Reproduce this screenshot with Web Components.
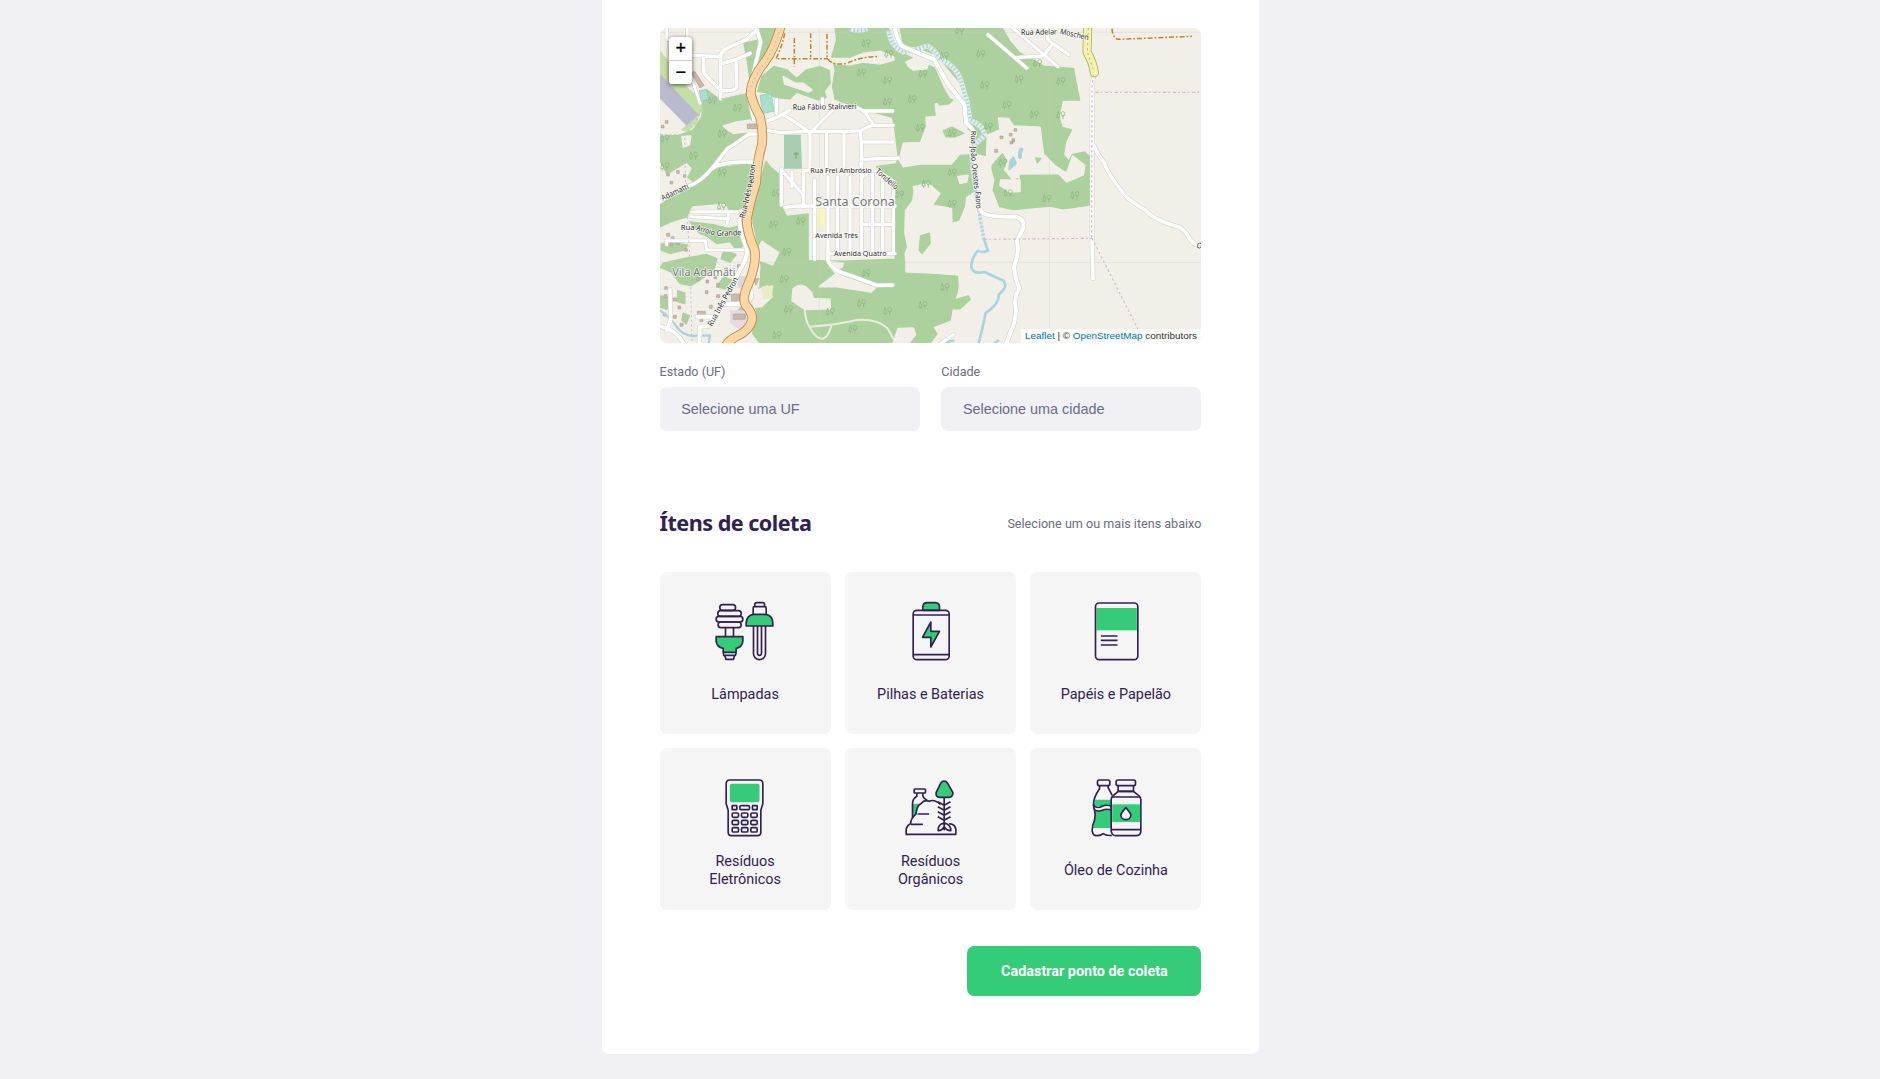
<!DOCTYPE html>
<html lang="pt-BR">
<head>
<meta charset="utf-8">
<title>Ecoleta</title>
<style>
html,body{margin:0;height:100%}
body{background:#f0f0f5;font-family:Roboto,sans-serif;overflow:hidden}
</style>
</head>
<body>
<collect-page>
  <collect-map slot="map"></collect-map>
  <select-field slot="field" label="Estado (UF)">Selecione uma UF</select-field>
  <select-field slot="field" label="Cidade">Selecione uma cidade</select-field>
  <section-legend slot="items" hint="Selecione um ou mais itens abaixo">Ítens de coleta</section-legend>
  <item-grid slot="items">
    <item-card icon="lamp">Lâmpadas</item-card>
    <item-card icon="battery">Pilhas e Baterias</item-card>
    <item-card icon="paper">Papéis e Papelão</item-card>
    <item-card icon="device">Resíduos Eletrônicos</item-card>
    <item-card icon="organic">Resíduos Orgânicos</item-card>
    <item-card icon="oil">Óleo de Cozinha</item-card>
  </item-grid>
  <submit-button slot="action">Cadastrar ponto de coleta</submit-button>
</collect-page>

<template id="map-art">
<svg viewBox="30 24 1625.4 945" preserveAspectRatio="none" aria-hidden="true">
  <defs>
    <g id="t" fill="none" stroke="#8cb781" stroke-width="2.2">
      <path d="M-12,6 L-7,-12 L-2,6 Z M-7,6 V12 M7,12 V1 M7,4 L3,0 M7,4 L11,0"/><circle cx="7" cy="-5" r="6"/>
    </g>
  </defs>
  <rect x="30" y="24" width="1626" height="945" fill="#f2efe9"/>
  <g fill="#add19e" stroke="#add19e" stroke-width="5" stroke-linejoin="round">
    <!-- western woods -->
    <path d="M322,24 L382,24 374,62 340,120 300,180 318,120 325,66Z"/>
    <path d="M282,70 L320,62 316,120 300,178 292,120Z"/>
    <path d="M170,210 L210,240 290,222 292,250 306,300 270,306 232,314 218,322 236,338 300,340 250,372 210,400 176,446 120,494 60,480 30,420 30,350 90,346 130,330 156,290 158,250Z"/>
    <path d="M30,90 L60,130 110,200 142,226 158,262 140,310 112,336 92,330 140,290 90,240 30,165Z" fill="#c5dfa8" stroke="none"/>
    <path d="M190,446 L310,430 316,520 296,560 240,572 226,548 126,556 110,590 60,606 30,620 30,540 110,510Z"/>
    <path d="M120,606 L186,614 236,626 270,618 284,670 262,692 240,664 200,670 172,648 150,640Z"/>
    <path d="M34,672 L70,668 112,676 104,690 60,700 34,690Z"/>
    <path d="M40,730 L110,714 170,704 200,716 192,748 156,776 124,796 90,790 64,756 32,742Z"/>
    <path d="M84,812 L104,820 104,850 82,844Z M30,828 L62,832 50,868 30,860Z M222,690 L258,704 240,726 214,716Z M222,772 L244,780 226,806 200,800Z"/>
    <path d="M100,880 L118,888 108,912 96,900Z M282,850 L292,880 270,900 250,890Z"/>
    <!-- blobs beside the highway -->
    <path d="M372,140 L410,150 440,176 470,150 510,140 538,152 540,190 522,214 528,232 506,240 440,216 420,236 376,232 350,218 324,214 336,170Z"/>
    <!-- central and eastern woods -->
    <path d="M556,24 L1056,24 1078,62 1108,98 1184,140 1270,146 1274,190 1288,240 1262,234 1236,242 1226,290 1236,322 1264,330 1246,366 1240,404 1256,424 1268,404 1304,396 1318,410 1320,555 1240,566 1200,558 1090,568 1050,560 1030,510 1036,480 1024,440 1058,400 1074,430 1080,466 1114,484 1110,462 1180,464 1226,450 1188,430 1172,400 1170,330 1060,318 1040,296 1050,330 1010,352 1006,410 988,412 970,380 976,510 946,530 942,560 926,600 902,606 904,560 852,556 876,520 844,492 790,500 784,540 762,570 760,640 770,690 762,756 840,762 920,768 926,820 900,846 902,900 846,920 836,969 330,969 308,940 322,880 310,840 330,800 334,740 326,680 310,610 306,560 326,500 348,424 360,440 394,470 394,560 410,590 474,582 474,722 580,724 736,718 738,480 680,440 738,432 746,416 734,320 728,292 660,272 620,262 556,238 548,200 556,150 546,110 560,60Z"/>
    <path d="M878,330 L906,320 940,338 920,352 884,350Z"/>
  </g>
  <g fill="#f2efe9" stroke="#f2efe9" stroke-width="5" stroke-linejoin="round">
    <path d="M220,318 L260,306 300,300 316,332 250,340Z"/>
    <path d="M196,438 L240,392 304,346 322,350 312,424 240,428Z"/>
    <path d="M46,470 L110,432 122,446 108,474 130,490 60,506 34,508Z"/>
    <path d="M96,350 L122,348 118,374 100,382Z"/>
    <path d="M640,100 L690,94 730,110 732,120 690,132 640,126 600,134 560,132 540,116 600,116Z"/>
    <path d="M720,24 L746,24 756,76 810,90 860,110 892,150 926,190 950,262 950,330 930,328 930,276 890,214 856,140 800,116 762,96 740,80Z"/>
    <path d="M768,126 L800,112 836,128 830,146 790,150 776,140Z"/>
    <path d="M856,252 L910,240 940,272 948,330 970,340 970,400 928,402 904,432 810,432 760,440 748,420 760,370 812,368 830,320 828,292 860,290Z"/>
    <path d="M1046,294 L1076,296 1090,318 1170,322 1180,402 1216,438 1250,460 1268,408 1304,436 1300,464 1250,486 1226,460 1110,462 1090,480 1064,450 1074,420 1058,394 1022,430 1020,480 980,470 966,400 1010,412 1012,346 1050,330Z"/>
    <path d="M1052,480 L1110,480 1110,514 1080,516 1050,496Z"/>
    <path d="M400,170 L436,190 460,190 486,210 476,216 440,204 404,192Z"/>
    <path d="M790,500 L836,492 856,510 848,556 904,566 906,620 936,600 950,560 1060,566 1060,969 840,969 850,940 904,900 894,846 926,820 920,764 840,758 770,756 766,700 790,640 786,590 804,550Z"/>
    <path d="M336,664 L386,698 368,734 310,714Z"/>
    <path d="M300,820 L352,798 366,830 334,860 296,862Z"/>
    <path d="M430,806 Q446,792 466,800 L484,816 490,836 540,838 540,866 464,868 426,842Z"/>
    <path d="M510,798 L558,762 530,724 580,730 576,742 550,752 580,770 676,804 664,816 560,800 508,800Z"/>
    <path d="M744,926 L790,924 796,944 776,969 730,969Z"/>
    <path d="M924,470 L954,466 950,486 930,490Z"/>
  </g>
  <g fill="#add19e" stroke="#add19e" stroke-width="5" stroke-linejoin="round">
    <path d="M880,332 L906,322 940,340 916,350 888,350Z M812,648 L838,640 840,670 816,700 808,690Z"/>
    <path d="M860,240 L880,232 908,240 894,252 868,254Z"/>
    <path d="M812,768 L922,770 924,800 914,840 954,828 960,838 930,866 906,866 900,900 846,918 860,942 840,969 812,969Z"/>
    <path d="M1158,414 L1172,416 1162,428Z"/>
    <path d="M1208,180 L1270,146 1288,240 1236,240Z M1290,400 L1320,408 1320,430Z"/>
  </g>
  <!-- airport, pitches, civic areas -->
  <path d="M30,162 L146,284 110,318 30,236Z" fill="#bbbbcf"/>
  <path d="M148,212 L170,208 176,238 154,244Z M330,226 L364,220 372,274 338,280Z" fill="#aae0cb" stroke="#8cc6b0" stroke-width="2"/>
  <path d="M402,344 L452,344 456,446 402,446Z" fill="#aacbaf"/>
  <path d="M438,396 V416 M431,402 H446" stroke="#7fab83" stroke-width="4"/>
  <path d="M500,564 L526,568 524,622 500,622Z" fill="#f8f6b8"/>
  <path d="M240,870 L290,872 288,920 264,926 240,910Z" fill="#ead8e6"/>
  <path d="M334,800 L370,796 366,834 340,838Z" fill="#e8ecc7"/>
  <path d="M264,766 L290,770 280,810 262,800Z" fill="#dcdad6"/>
  <g fill="#c8b9ad" stroke="#b5a294" stroke-width="2">
    <path d="M292,312 H324 V326 H292Z M250,882 H286 V898 H250Z M244,822 H270 V842 H244Z M142,874 H166 V884 H142Z M310,776 L326,776 318,796Z M124,158 L134,154 162,196 150,204Z"/>
    <path d="M50,640 h9 v9 h-9z M64,650 h8 v10 h-8z M80,664 h8 v10 h-8z M104,686 h8 v8 h-8z M60,670 h8 v8 h-8z M44,800 h8 v8 h-8z M42,824 h9 v9 h-9z M70,834 h9 v9 h-9z M84,858 h8 v9 h-8z M40,880 h8 v8 h-8z M140,774 h8 v8 h-8z M168,780 h8 v9 h-8z M192,768 h8 v8 h-8z M200,790 h9 v9 h-9z M166,812 h8 v9 h-8z M200,824 h9 v9 h-9z M224,744 h9 v9 h-9z M262,734 h8 v9 h-8z M206,850 h8 v9 h-8z M178,856 h9 v9 h-9z M150,896 h8 v9 h-8z M70,886 h9 v9 h-9z M90,910 h9 v9 h-9z M46,920 h8 v9 h-8z"/>
    <path d="M1092,326 h8 v8 h-8z M1078,340 h8 v8 h-8z M1050,348 h9 v8 h-9z M1086,356 h8 v10 h-8z M1034,388 h9 v9 h-9z M1080,364 h9 v8 h-9z M50,460 h8 v8 h-8z M80,452 h8 v8 h-8z M100,464 h8 v8 h-8z M60,484 h8 v8 h-8z M46,302 h8 v8 h-8z M34,316 h8 v8 h-8z"/>
  </g>
  <!-- water -->
  <g fill="none" stroke="#aad3df" stroke-linejoin="round" stroke-linecap="round">
    <g stroke-linecap="butt">
      <path d="M600,26 Q625,36 652,26 M716,30 Q722,80 760,96 Q800,90 832,78 Q850,86 870,116 Q920,140 932,180 L950,240 960,300 Q1004,320 1004,346 Q980,370 966,380" stroke="#e3edea" stroke-width="15"/>
      <path d="M600,26 Q625,36 652,26 M716,30 Q722,80 760,96 Q800,90 832,78 Q850,86 870,116 Q920,140 932,180 L950,240 960,300 Q1004,320 1004,346 Q980,370 966,380" stroke-width="13" stroke-dasharray="4 7"/>
      <path d="M966,380 Q960,420 976,510 L986,570 1002,658" stroke="#dfe9e8" stroke-width="11"/>
      <path d="M966,380 Q960,420 976,510 L986,570 1002,658" stroke-width="10" stroke-dasharray="5 7"/>
    </g>
    <path d="M1002,658 L1014,692 Q1000,700 984,692 Q962,718 964,742 Q970,764 1004,756 L1060,782 Q1076,800 1046,824 Q1050,850 1006,880 Q1004,900 986,969" stroke-width="8"/>
    <path d="M30,872 Q60,890 80,920 Q96,946 130,948 L180,946 176,969" stroke-width="7"/>
    <path d="M1114,388 Q1108,396 1110,412" stroke-width="12"/>
    <path d="M1080,424 L1090,412 1098,430 1078,448Z" fill="#aad3df" stroke-width="6"/>
    <path d="M890,966 L910,962 M1034,969 L1044,962" stroke-width="8"/>
  </g>
  <path d="M30,37 H1653 M30,727 H1653 M508,24 V969 M1198,24 V969" stroke="#c9cfc5" stroke-width="1.6" opacity=".65"/>
  <g>
    <use href="#t" x="648" y="70"/><use href="#t" x="634" y="158"/><use href="#t" x="712" y="182"/><use href="#t" x="786" y="238"/><use href="#t" x="810" y="324"/><use href="#t" x="716" y="102"/><use href="#t" x="818" y="162"/><use href="#t" x="712" y="246"/><use href="#t" x="216" y="342"/><use href="#t" x="130" y="408"/><use href="#t" x="216" y="458"/><use href="#t" x="44" y="356"/><use href="#t" x="186" y="242"/><use href="#t" x="262" y="264"/><use href="#t" x="44" y="440"/><use href="#t" x="214" y="560"/><use href="#t" x="370" y="614"/><use href="#t" x="452" y="604"/><use href="#t" x="410" y="696"/><use href="#t" x="402" y="778"/><use href="#t" x="415" y="868"/><use href="#t" x="380" y="946"/><use href="#t" x="540" y="876"/><use href="#t" x="634" y="850"/><use href="#t" x="712" y="874"/><use href="#t" x="608" y="928"/><use href="#t" x="648" y="760"/><use href="#t" x="818" y="856"/><use href="#t" x="748" y="524"/><use href="#t" x="884" y="802"/><use href="#t" x="928" y="32"/><use href="#t" x="992" y="102"/><use href="#t" x="882" y="108"/><use href="#t" x="1004" y="196"/><use href="#t" x="1106" y="178"/><use href="#t" x="1162" y="130"/><use href="#t" x="1232" y="184"/><use href="#t" x="1070" y="256"/><use href="#t" x="1152" y="284"/><use href="#t" x="1014" y="320"/><use href="#t" x="906" y="340"/><use href="#t" x="1058" y="428"/><use href="#t" x="906" y="458"/><use href="#t" x="828" y="492"/><use href="#t" x="906" y="552"/><use href="#t" x="1074" y="520"/><use href="#t" x="1190" y="536"/><use href="#t" x="1274" y="526"/><use href="#t" x="1232" y="286"/><use href="#t" x="378" y="520"/>
  </g>
  <g id="streets"></g>
  <g fill="none" stroke="#eef0e2" stroke-width="6" opacity=".9">
    <path d="M464,868 Q466,900 478,920 Q560,915 620,900 Q680,896 712,924 L736,966 M478,920 Q500,960 520,956 Q536,948 544,918"/>
  </g>
  <g fill="none" stroke="#b8862f" stroke-width="4.5" stroke-dasharray="15 6 5 6">
    <path d="M404,40 Q396,80 378,116 H534 M433,54 V140 M482,40 V112 M531,42 V112 M534,118 Q550,138 590,130 Q640,108 684,110"/>
    <path d="M1386,26 Q1388,56 1406,58 L1626,49"/>
  </g>
  <g fill="none" stroke="#cdb9cf" stroke-width="3.4">
    <path d="M1336,217 H1653 M1002,658 L1326,655" stroke-dasharray="10 6 5 8"/>
    <path d="M1326,655 L1470,940" stroke-dasharray="7 8"/>
    <path d="M30,344 H104 L106,470 110,560 118,690 122,800 126,969 M104,344 Q150,300 158,250 L280,222" stroke-width="3" stroke-dasharray="6 8"/>
  </g>
  <path d="M1313,24 L1311,96 Q1330,130 1333,158" fill="none" stroke="#aab15c" stroke-width="27" stroke-linecap="round"/>
  <path d="M1313,20 L1311,96 Q1330,130 1333,158" fill="none" stroke="#f4f5aa" stroke-width="22" stroke-linecap="round"/>
  <path d="M1315,24 L1312,96 L1332,156 M1330,166 L1326,200 1325,655" fill="none" stroke="#c3adc6" stroke-width="3.4" stroke-dasharray="7 8"/>
  <g fill="none" stroke-linejoin="round">
    <path d="M392,20 Q372,90 344,126 Q302,180 302,222 Q312,260 330,290 Q340,330 336,372 Q320,430 318,490 Q298,550 290,602 Q292,640 314,690 Q320,730 296,790 Q276,830 286,854 Q310,880 306,900 Q300,930 262,948 Q236,960 228,976" stroke="#b58a45" stroke-width="29"/>
    <path d="M392,20 Q372,90 344,126 Q302,180 302,222 Q312,260 330,290 Q340,330 336,372 Q320,430 318,490 Q298,550 290,602 Q292,640 314,690 Q320,730 296,790 Q276,830 286,854 Q310,880 306,900 Q300,930 262,948 Q236,960 228,976" stroke="#fcd6a4" stroke-width="24"/>
    <path d="M388,36 Q370,94 342,132 Q310,176 294,220" stroke="#cbb3c0" stroke-width="3" stroke-dasharray="5 9"/>
  </g>
  <g id="names" font-family="'Noto Sans',sans-serif" font-size="23.5" fill="#2b2b2b" stroke="#fff" stroke-opacity=".75" stroke-width="5" paint-order="stroke" stroke-linejoin="round"></g>
</svg>
</template>

<script>
const define=(name,css,html,setup)=>customElements.define(name,class extends HTMLElement{
  constructor(){super();const r=this.attachShadow({mode:'open'});r.innerHTML=`<style>${css}</style>${html}`}
  connectedCallback(){if(setup)setup(this,this.shadowRoot)}
});

define('collect-page',`
:host{display:flex;justify-content:center;padding-right:19px;height:1079px;box-sizing:border-box;align-items:flex-start}
main{width:657px;height:1054px;box-sizing:border-box;padding:28px 57.6px 57.6px;background:#fff;border-radius:0 0 7.2px 7.2px;display:flex;flex-direction:column}
.fields{display:flex;gap:21.6px;margin-top:21px}
.items{margin-top:auto;display:flex;flex-direction:column}
.action{display:flex;justify-content:flex-end;margin-top:36px}`,
`<main><slot name="map"></slot><div class="fields"><slot name="field"></slot></div><div class="items"><slot name="items"></slot></div><div class="action"><slot name="action"></slot></div></main>`);

define('select-field',`
:host{display:flex;flex-direction:column;flex:1}
label{font-size:12.6px;line-height:15px;color:#6c6c80;margin-bottom:8px}
div{height:44px;border-radius:7.2px;background:#f0f0f5;color:#6c6c80;padding:0 21.6px;display:flex;align-items:center;font:14.4px "Liberation Sans",Arial,sans-serif}`,
`<label></label><div><slot></slot></div>`,(e,r)=>r.querySelector('label').textContent=e.getAttribute('label'));

define('section-legend',`
:host{display:flex;justify-content:space-between;align-items:center;height:26px;margin-bottom:35.6px}
h2{margin:0;font:700 21.6px/26px "Noto Sans",sans-serif;letter-spacing:-.52px;color:#322153;white-space:nowrap}
span{font-size:12.6px;color:#6c6c80}`,
`<h2><slot></slot></h2><span></span>`,(e,r)=>r.querySelector('span').textContent=e.getAttribute('hint'));

define('item-grid',`:host{display:grid;grid-template-columns:repeat(3,1fr);gap:14.4px}`,`<slot></slot>`);

const icons={
lamp:['187.5 104',`<rect x="211" y="118" width="47" height="17" rx="8"/><rect x="205" y="136" width="70" height="17" rx="8"/><rect x="200" y="153" width="80" height="17" rx="8"/><rect x="206" y="170" width="69" height="17" rx="8"/><path d="M228,188 V213 M252,188 V213"/><path class="g" d="M200,214 H280 V228 Q278,245 260,249 V261 H221 V249 Q202,245 200,228Z"/><path d="M221,261 L223,270 H258 L260,261 M226,271 L229,282 H252 L255,271"/><path d="M316,124 V116 Q317,112 322,112 H340 Q344,112 345,116 V124 M311,146 V128 Q311,124 315,124 H346 Q350,124 350,128 V146"/><path class="g" d="M290,182 V172 Q292,150 312,147 H350 Q370,152 370,172 V182Z"/><path d="M312,182 V265 A18,18 0 0 0 348,265 V182 M324,182 V264 A6,6 0 0 0 336,264 V182"/>`],
battery:['172.5 104',`<path class="g" d="M247,135 V124 Q248,112 259,112 H285 Q297,113 297,124 V135Z"/><rect x="218" y="135" width="108" height="148" rx="11"/><path d="M218,149 H326 M218,268 H326"/><path class="g" d="M271,170 V198 H297 L271,245 V216 H246Z"/>`],
paper:['187.5 104',`<rect class="f" x="228" y="128" width="121" height="67"/><rect x="225" y="113" width="127" height="170" rx="11"/><path d="M241,212 H291 M241,225 H291 M241,239 H291"/>`],
device:['187.5 107',`<path d="M241,119 H329 Q340,119 340,130 V190 L334,210 V276 Q334,286 324,286 H246 Q236,286 236,276 V210 L230,190 V130 Q230,119 241,119Z"/><rect class="f" x="241" y="130" width="89" height="56" rx="6"/><g><rect x="248" y="196" width="14" height="12" rx="1"/><rect x="271" y="196" width="29" height="12" rx="4"/><rect x="309" y="196" width="14" height="12" rx="1"/></g>`+[218,240,262].map(y=>[248,276,304].map(x=>`<rect x="${x}" y="${y}" width="19" height="13" rx="4"/>`).join('')).join('')],
organic:['172.5 107',`<path class="f" d="M216,190 H240 Q232,200 230,218 L216,230Z"/><rect x="221" y="146" width="34" height="12" rx="2"/><path d="M229,158 V168 Q216,176 216,190 V234 M247,158 V166 Q250,176 260,180"/><path d="M197,282 V268 Q198,256 210,250 Q212,232 226,222 Q228,196 241,190 Q252,177 266,183 Q280,175 300,192 M326,250 Q345,252 346,268 V282 H195"/><path d="M231,221 H266 M211,252 H247"/><path class="g" d="M311,122 Q304,122 300,130 L287,156 Q285,170 297,171 H326 Q339,168 337,156 L322,130 Q318,122 311,122Z"/><path d="M311,171 V270 M292,184 L311,195 330,184 M292,199 L311,210 330,199 M292,214 L311,225 330,214 M292,229 L311,240 330,229 M311,248 Q292,252 293,271 Q306,270 311,258 Q316,270 331,271 Q331,252 311,248"/>`],
oil:['187.5 107',`<path class="f" d="M222,178 H272 V198 H220Z M222,209 H272 V263 H217 Q226,240 222,209Z"/><rect x="231" y="119" width="37" height="17" rx="5"/><path d="M237,136 V145 Q219,172 219,190 Q219,200 222,208 Q226,225 222,240 Q215,255 215,270 Q216,286 228,286 Q240,287 248,280 Q258,287 274,285 M263,136 V142 L275,165"/><path class="w" d="M219,196 Q232,206 245,198 Q258,192 272,197 V209 Q258,204 245,210 Q232,215 222,208Z"/><path class="w" d="M293,153 L276,168 Q272,172 272,178 V272 Q274,286 286,286 H348 Q361,285 361,272 V178 Q361,170 354,165 L339,153Z"/><rect class="f" x="275" y="192" width="84" height="53"/><rect x="287" y="119" width="58" height="17" rx="5"/><path d="M293,136 V153 H339 V136 M274,170 H359 M272,268 H361"/><path class="w" d="M316,202 Q301,219 301,225 A15,13 0 0 0 331,225 Q331,219 316,202Z"/>`]
};
define('item-card',`
:host{display:flex;flex-direction:column;align-items:center;box-sizing:border-box;height:162px;padding:28.4px 36px 5.6px;background:#f5f5f5;border-radius:7.2px}
svg{width:66px;height:62px;flex:none;fill:none;stroke:#322153;stroke-width:5;stroke-linejoin:round;margin-left:.8px}
.g{fill:#34cb79}.f{fill:#34cb79;stroke:none}.w{fill:#f5f5f5}
span{flex:1;display:flex;align-items:center;text-align:center;font-size:14.4px;line-height:18px;color:#322153}
:host([icon=battery]),:host([icon=paper]),:host([icon=oil]){padding-left:10px;padding-right:10px}
:host([icon=paper]) svg,:host([icon=oil]) svg{margin-left:-.8px}`,
`<svg aria-hidden="true"></svg><span><slot></slot></span>`,(e,r)=>{const [o,a]=icons[e.getAttribute('icon')];const s=r.querySelector('svg');s.setAttribute('viewBox',o+' 198 186');s.innerHTML=a});

define('submit-button',`
button{width:234px;height:50.4px;border:0;border-radius:7.2px;background:#34cb79;color:#fff;font:700 14.4px Roboto,sans-serif;padding:1px 0 0}`,`<button><slot></slot></button>`);

/* each entry: stroke width, path */
const streets=[
[13,'M125,106 L162,108 210,110 M320,26 L332,66 308,170 296,230 312,300 M210,110 Q216,88 250,76 L290,58 320,30 M160,110 L162,160 212,212 M212,110 V236 M214,130 Q250,124 300,100 M258,126 L260,200 Q258,214 214,212'],
[10,'M50,24 V60 M50,60 L112,60 M112,60 V24 M64,90 L120,160 150,250'],
[12,'M346,304 Q380,296 420,270 M380,238 V280 M400,284 L470,330 M487,332 L556,262 M517,236 V256 M355,332 L390,338 470,334 600,334 630,332 668,314 M620,262 L645,276 670,314 M640,273 H728 M668,316 H730 M636,366 H730 M636,418 L746,414 M632,334 L636,430'],
[12,'M480,334 V456 M530,334 V440 M582,334 V440 M632,430 L640,470'],
[12,'M394,446 V555 M394,450 L456,520 M460,450 V560 M426,456 V500 M404,562 L440,558 H735 M494,480 V718 M460,452 L480,450 M534,470 V690 M562,470 V700 M600,470 V700 M634,460 V700 M668,462 V700 M698,480 V700 M730,500 V698 M636,613 H730 M540,701 H735'],
[13,'M534,690 V720 Q540,742 570,756 Q640,780 680,796 L728,795'],
[12,'M320,342 H296 Q260,370 232,386 L190,440 Q150,490 110,500 L60,524 30,546 M312,426 H266 Q210,428 186,446'],
[11,'M124,576 H264 M122,590 L236,596 M236,576 L232,610 M130,575 H250 M48,662 H166 L170,690 H280 M50,662 V674'],
[14,'M268,600 Q270,640 292,690 Q290,720 266,756 Q240,820 176,918 L150,920 148,969 M300,860 L262,852 226,852 M300,800 L304,830 290,860 M142,890 H196'],
[13,'M60,808 L62,900 50,930 M30,918 Q80,930 100,969'],
[14,'M734,24 Q742,60 756,78 Q780,90 852,118 L890,186 944,256 948,308 Q970,326 974,344 M990,568 Q994,578 1004,582 Q1030,592 1096,590 Q1124,596 1120,624 L1100,664 Q1110,690 1092,740 Q1094,770 1108,806 Q1090,830 1098,870 Q1096,910 1080,940 L1070,969'],
[12,'M1014,44 L1130,144 M1088,24 L1224,140 M1104,112 L1180,108 1208,72 1192,56 V24 M1208,70 L1256,104'],
[13,'M1334,160 L1326,190 M1326,190 V655 L1329,776 M1332,376 Q1340,400 1364,430 Q1366,450 1420,520 Q1440,545 1486,570 Q1510,600 1590,622 Q1612,640 1620,658 L1636,674'],
[12,'M870,972 L910,944']
];
/* each entry: x, y, rotation, length, text, font size and colour for district names */
const names=[
[428,270,-1,192,'Rua Fábio Stalivieri'],
[481,459,0,184,'Rua Frei Ambrósio'],
[675,456,41,82,'Tondello'],
[496,654,0,128,'Avenida Três'],
[552,708,0,158,'Avenida Quatro'],
[284,596,-77,90,'Rua Inês'],
[309,504,-84,70,'Pedron'],
[186,920,-61,163,'Rua Inês Pedron'],
[38,542,-25,88,'Adamatti'],
[92,629,0,42,'Rua'],
[138,630,17,56,'Arroio'],
[200,648,-2,74,'Grande'],
[1113,45,-1,108,'Rua Adelar'],
[1229,41,13,88,'Moschen'],
[963,332,90,40,'Rua'],
[962,380,87,44,'João'],
[965,432,84,76,'Orestes'],
[976,516,87,50,'Faoro'],
[1638,682,20,16,'O'],
[496,557,0,238,'Santa Corona',36],
[67,769,0,190,'Vila Adamati',32]
];
define('collect-map',`
:host{display:block;position:relative;height:315px;border-radius:7.2px;overflow:hidden;flex:none}
svg{display:block;width:100%;height:315px}
.zoom{position:absolute;left:9.4px;top:9px;width:23.4px;border-radius:3.6px;background:#fff;box-shadow:0 1px 4.5px rgba(0,0,0,.65);font:400 18px/23px "Liberation Sans",sans-serif;-webkit-text-stroke:.3px #000;text-align:center;color:#000}
.zoom div{height:23.4px}.zoom div+div{border-top:1px solid #ccc;height:23px;line-height:22px}
.credit{position:absolute;right:0;bottom:0;height:14px;padding:0 4.5px;background:rgba(255,255,255,.7);font:9.9px/14px "Liberation Sans",sans-serif;color:#333;white-space:nowrap}
.credit b{font-weight:400;color:#0078a8}`,
`<div class="art"></div><div class="zoom"><div>+</div><div>−</div></div><div class="credit"><b>Leaflet</b> | © <b>OpenStreetMap</b> contributors</div>`,
(e,r)=>{
  r.querySelector('.art').append(document.getElementById('map-art').content.cloneNode(true));
  const line=(c,x)=>streets.map(([w,d])=>`<path d="${d}" stroke="${c}" stroke-width="${w+x-2}"/>`).join('');
  const g=r.querySelector('#streets');
  g.setAttribute('fill','none');g.setAttribute('stroke-linecap','round');g.setAttribute('stroke-linejoin','round');
  g.innerHTML=line('#cfcdca',3)+line('#fff',0);
  r.querySelector('#names').innerHTML=names.map(([x,y,a,l,t,s])=>`<text transform="translate(${x} ${y}) rotate(${a})" textLength="${l}" lengthAdjust="spacingAndGlyphs"${s?` font-size="${s}" fill="#777"`:''}>${t}</text>`).join('');
});
</script>
</body>
</html>
